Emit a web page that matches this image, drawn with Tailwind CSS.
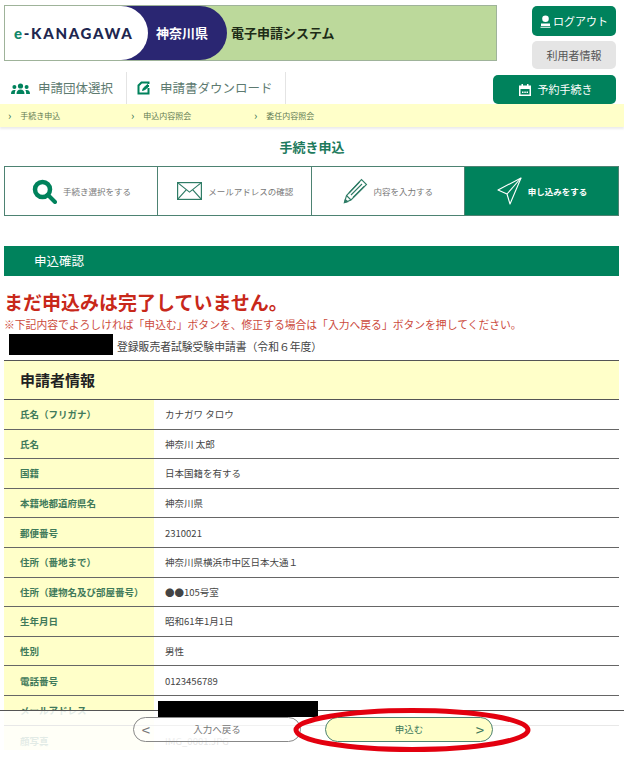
<!DOCTYPE html>
<html lang="ja">
<head>
  <meta charset="UTF-8" />
  <title>手続き申込</title>
  <script src="https://cdn.jsdelivr.net/npm/@tailwindcss/browser@4"></script>
</head>
<body class="relative h-[758px] overflow-hidden bg-white font-['Noto_Sans_CJK_JP','Noto_Sans',sans-serif] text-[#444]">

  <!-- header -->
  <div class="flex h-[104px] items-start justify-between pl-[4px] pr-[8px] pt-[5px]">
    <div>
      <div class="relative flex h-[56px] w-[493px] items-center overflow-hidden border border-[#9fb39a] bg-[#bcd99b]">
        <div class="flex h-full w-[222px] items-center justify-end rounded-r-[28px] bg-[#2a2672] pr-[19px] text-[13px] font-bold text-white">神奈川県</div>
        <div class="absolute left-0 top-0 flex h-full w-[143px] items-center rounded-r-[28px] bg-white pl-[9px] font-['Lato',sans-serif] text-[15px] font-black tracking-[1.7px] text-[#20264f]"><span class="text-[#12876a]">e</span>-KANAGAWA</div>
        <div class="pl-[4px] text-[13px] font-bold text-[#1d2b16]">電子申請システム</div>
      </div>
      <div class="mt-[11px] flex h-[32px] text-[12.5px] text-[#5d7a70]">
        <div class="flex w-[123px] items-center gap-[8px] border-r border-[#e4e4e4] pl-[7px]">
          <svg class="h-[11px] w-[19px]" viewBox="0 0 19 11" fill="#00825c"><circle cx="9.5" cy="3" r="2.6"/><circle cx="3.4" cy="4" r="2"/><circle cx="15.6" cy="4" r="2"/><path d="M5.5 11c0-3 1.500-4.500 4-4.500s4 1.500 4 4.500zM0 11c0-2.500 1-4 3.400-4 .6 0 1 .1 1.300.3C3.900 8.300 3.800 9.500 3.800 11zM19 11c0-2.500-1-4-3.400-4-.6 0-1 .1-1.300.3.800 1 .9 2.200.9 3.700z"/></svg>
          <span>申請団体選択</span>
        </div>
        <div class="flex w-[159px] items-center gap-[10px] border-r border-[#e4e4e4] pl-[10px]">
          <svg class="h-[14px] w-[13px]" viewBox="0 0 13 14" fill="none" stroke="#00825c" stroke-width="2"><path d="M11.500 7v5.500H1.500V4.500L4.500 1.500h7V3"/><path d="M5.500 9.500l1-2.500 4-3.500 1.500 1.500-4 3.500z" fill="#00825c" stroke-width="1"/></svg>
          <span>申請書ダウンロード</span>
        </div>
      </div>
    </div>
    <div class="ml-[-4px] flex w-[123px] flex-col items-end">
      <div class="mt-px flex h-[30px] w-[84px] items-center justify-center gap-[2px] rounded-[5px] bg-[#00825c] text-[11px] text-white">
        <svg class="h-[13px] w-[11px]" viewBox="0 0 11 13" fill="white"><circle cx="5.500" cy="3.800" r="3.300"/><path d="M1 8.500h9v2.500H1zM.5 11.800h10v1H.5z"/></svg>
        <span>ログアウト</span>
      </div>
      <div class="mt-[5px] flex h-[28px] w-[84px] items-center justify-center rounded-[5px] bg-[#e5e5e5] text-[11px] text-[#555]">利用者情報</div>
      <div class="mt-[6px] flex h-[29px] w-[123px] items-center justify-center gap-[7px] rounded-[5px] bg-[#00825c] pl-[2px] text-[11px] text-white">
        <svg class="h-[12px] w-[12px]" viewBox="0 0 12 12" fill="white"><path d="M2.500 0h1.500v1.500h4V0h1.500v1.500H12V12H0V1.500h2.500z"/><path d="M1.500 5h9v5.500h-9z" fill="#00825c"/><path d="M3 7.500h1.500V9H3zM5.300 7.500h1.500V9H5.300zM7.500 7.500H9V9H7.500z"/></svg>
        <span>予約手続き</span>
      </div>
    </div>
  </div>

  <!-- sub nav -->
  <div class="flex h-[23px] items-center bg-[#ffffc9] pl-[8px] text-[8px] text-[#5f7a52] shadow-[0_2px_2px_rgba(0,0,0,0.08)]">
    <div class="flex w-[123px] items-center gap-[9px]"><span class="text-[11px] leading-none text-[#2f6a4f]">›</span><span>手続き申込</span></div>
    <div class="flex w-[123px] items-center gap-[9px]"><span class="text-[11px] leading-none text-[#2f6a4f]">›</span><span>申込内容照会</span></div>
    <div class="flex w-[123px] items-center gap-[9px]"><span class="text-[11px] leading-none text-[#2f6a4f]">›</span><span>委任内容照会</span></div>
  </div>

  <h1 class="mt-[10px] h-[29px] text-center text-[13px] font-bold leading-[19px] text-[#1d7a5c]">手続き申込</h1>

  <!-- steps -->
  <div class="ml-[4px] grid h-[50px] w-[615px] grid-cols-4 border border-[#4d8272] text-[8.5px] text-[#777]">
    <div class="flex items-center gap-[6px] border-r border-[#4d8272] pl-[27px]">
      <svg class="h-[25px] w-[25px]" viewBox="0 0 25 25" fill="none" stroke="#00825c"><circle cx="10.500" cy="10.500" r="7.500" stroke-width="4.500"/><path d="M16 16l7 7" stroke-width="4" stroke-linecap="round"/></svg>
      <span>手続き選択をする</span>
    </div>
    <div class="flex items-center gap-[6px] border-r border-[#4d8272] pl-[19px]">
      <svg class="h-[18px] w-[25px]" viewBox="0 0 25 18" fill="none" stroke="#2f7c66" stroke-width="1.200"><rect x=".6" y=".6" width="23.800" height="16.800"/><path d="M.6.6l11.900 9.500L24.400.6M.6 17.400l8.800-9.800M24.400 17.400l-8.800-9.800"/></svg>
      <span>メールアドレスの確認</span>
    </div>
    <div class="flex items-center gap-[6px] border-r border-[#4d8272] pl-[31px]">
      <svg class="h-[26px] w-[25px]" viewBox="0 0 25 26" fill="none" stroke="#2f7c66" stroke-width="1.100"><path d="M1.500 24.500l2-7L18.500 1.500l5 5L8 22z"/><path d="M3.500 17.500L8 22M6 15L16.500 4M8 17L19 6M10 19.500L21 8.500"/><path d="M1.500 24.500l.8-3 2.400 2.200z" fill="#2f7c66"/></svg>
      <span>内容を入力する</span>
    </div>
    <div class="flex items-center gap-[6px] bg-[#00825c] pl-[32px] font-bold text-white">
      <svg class="h-[28px] w-[25px]" viewBox="0 0 25 28" fill="none" stroke="white" stroke-width="1.100" stroke-linejoin="round"><path d="M24 1L1 13l9 4 3 10z"/><path d="M24 1L10 17"/></svg>
      <span>申し込みをする</span>
    </div>
  </div>

  <div class="ml-[4px] mt-[30px] flex h-[30px] w-[615px] items-center bg-[#00825c] pl-[30px] text-[12.5px] text-white">申込確認</div>

  <div class="ml-[4px] mt-[11px] text-[19px] font-bold leading-[29px] text-[#c8281a]">まだ申込みは完了していません。</div>
  <div class="ml-[4px] mt-px text-[10.8px] leading-[14px] text-[#cc4a3c]">※下記内容でよろしければ「申込む」ボタンを、修正する場合は「入力へ戻る」ボタンを押してください。</div>

  <div class="ml-[9px] mt-[3px] flex h-[21px] items-center gap-[4px] text-[10.8px]">
    <div class="h-[21px] w-[104px] bg-black"></div>
    <span class="mt-[4px]">登録販売者試験受験申請書（令和６年度）</span>
  </div>

  <!-- applicant table -->
  <div class="ml-[4px] mt-[5px] w-[615px] border-t border-[#555]">
    <div class="flex h-[39px] items-center border-b border-[#555] bg-[#ffffc9] pl-[16px] text-[15px] font-bold text-[#222]">申請者情報</div>
    <div class="grid h-[29.6px] grid-cols-[150px_1fr] border-b border-[#666] text-[9.500px]"><div class="flex items-center bg-[#ffffc9] pl-[16px] font-bold text-[#3f7a5b]">氏名（フリガナ）</div><div class="flex items-center pl-[11px]">カナガワ タロウ</div></div>
    <div class="grid h-[29.6px] grid-cols-[150px_1fr] border-b border-[#666] text-[9.500px]"><div class="flex items-center bg-[#ffffc9] pl-[16px] font-bold text-[#3f7a5b]">氏名</div><div class="flex items-center pl-[11px]">神奈川 太郎</div></div>
    <div class="grid h-[29.6px] grid-cols-[150px_1fr] border-b border-[#666] text-[9.500px]"><div class="flex items-center bg-[#ffffc9] pl-[16px] font-bold text-[#3f7a5b]">国籍</div><div class="flex items-center pl-[11px]">日本国籍を有する</div></div>
    <div class="grid h-[29.6px] grid-cols-[150px_1fr] border-b border-[#666] text-[9.500px]"><div class="flex items-center bg-[#ffffc9] pl-[16px] font-bold text-[#3f7a5b]">本籍地都道府県名</div><div class="flex items-center pl-[11px]">神奈川県</div></div>
    <div class="grid h-[29.6px] grid-cols-[150px_1fr] border-b border-[#666] text-[9.500px]"><div class="flex items-center bg-[#ffffc9] pl-[16px] font-bold text-[#3f7a5b]">郵便番号</div><div class="flex items-center pl-[11px]">2310021</div></div>
    <div class="grid h-[29.6px] grid-cols-[150px_1fr] border-b border-[#666] text-[9.500px]"><div class="flex items-center bg-[#ffffc9] pl-[16px] font-bold text-[#3f7a5b]">住所（番地まで）</div><div class="flex items-center pl-[11px]">神奈川県横浜市中区日本大通１</div></div>
    <div class="grid h-[29.6px] grid-cols-[150px_1fr] border-b border-[#666] text-[9.500px]"><div class="flex items-center bg-[#ffffc9] pl-[16px] font-bold text-[#3f7a5b]">住所（建物名及び部屋番号）</div><div class="flex items-center pl-[11px]">●●105号室</div></div>
    <div class="grid h-[29.6px] grid-cols-[150px_1fr] border-b border-[#666] text-[9.500px]"><div class="flex items-center bg-[#ffffc9] pl-[16px] font-bold text-[#3f7a5b]">生年月日</div><div class="flex items-center pl-[11px]">昭和61年1月1日</div></div>
    <div class="grid h-[29.6px] grid-cols-[150px_1fr] border-b border-[#666] text-[9.500px]"><div class="flex items-center bg-[#ffffc9] pl-[16px] font-bold text-[#3f7a5b]">性別</div><div class="flex items-center pl-[11px]">男性</div></div>
    <div class="grid h-[29.6px] grid-cols-[150px_1fr] border-b border-[#666] text-[9.500px]"><div class="flex items-center bg-[#ffffc9] pl-[16px] font-bold text-[#3f7a5b]">電話番号</div><div class="flex items-center pl-[11px]">0123456789</div></div>
    <div class="grid h-[29.6px] grid-cols-[150px_1fr] border-b border-[#666] text-[9.500px]"><div class="flex items-center bg-[#ffffc9] pl-[16px] font-bold text-[#3f7a5b]">メールアドレス</div><div></div></div>
    <div class="grid h-[24px] grid-cols-[150px_1fr] text-[9.500px]"><div class="bg-[#ffffc9] pl-[16px] pt-[8px] font-bold text-[#3f7a5b]">顔写真</div><div class="pl-[11px] pt-[8px]">IMG_0001.JPG</div></div>
  </div>

  <!-- fixed footer over the table -->
  <div class="absolute bottom-0 left-0 flex h-[48px] w-full items-start gap-[24px] border-t border-[#555] bg-white/85 pl-[133px] pt-[6px]">
    <div class="grid h-[25px] w-[168px] grid-cols-[24px_1fr_24px] items-center rounded-full border border-[#888] bg-white/40 text-center text-[9.500px] text-[#777]"><span class="text-[15px] leading-none">&lt;</span><span>入力へ戻る</span><span></span></div>
    <div class="grid h-[25px] w-[168px] grid-cols-[24px_1fr_24px] items-center rounded-full border border-[#4d8272] bg-[#ffffc9] text-center text-[9.500px] text-[#3f7a5b]"><span></span><span>申込む</span><span class="text-[15px] leading-none">&gt;</span></div>
  </div>

  <!-- redaction and red marker drawn over the screenshot -->
  <div class="absolute left-[158px] top-[701px] h-[16px] w-[160px] bg-black"></div>
  <svg class="absolute left-[292px] top-[708px] h-[44px] w-[240px]" viewBox="0 0 240 44" fill="none"><ellipse cx="120" cy="22" rx="116" ry="19.500" stroke="#e3000f" stroke-width="5"/></svg>
</body>
</html>
